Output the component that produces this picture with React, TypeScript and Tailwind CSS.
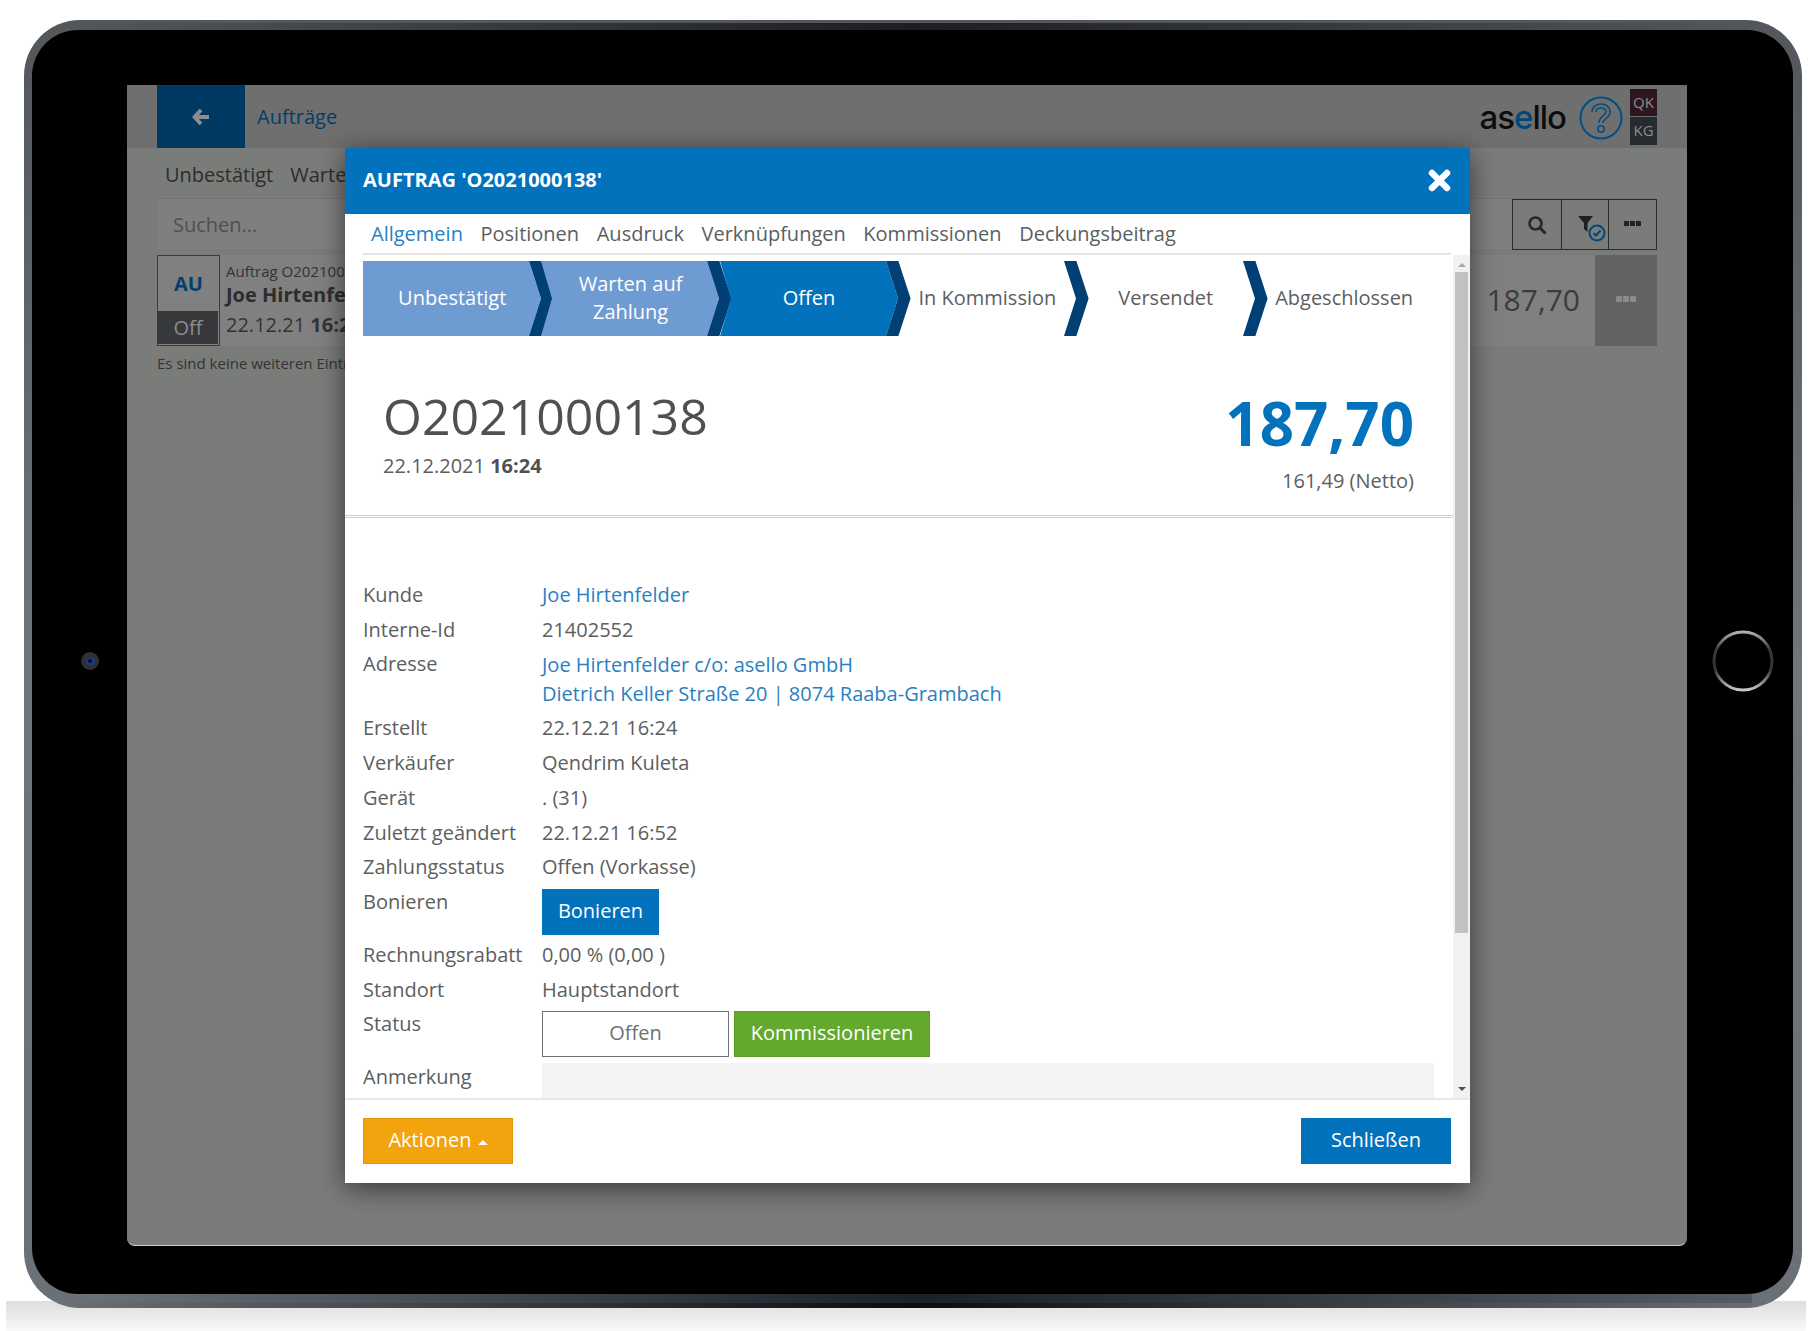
const OS = "font-['Open_Sans',sans-serif]";

const steps = [
  { t: <>Unbestätigt</>, fill: '#6f9bd3', text: 'text-white', first: true },
  { t: <>Warten auf<br />Zahlung</>, fill: '#6f9bd3', text: 'text-white' },
  { t: <>Offen</>, fill: '#0272bd', text: 'text-white' },
  { t: <>In Kommission</>, fill: 'none', text: 'text-[#5c5e60]' },
  { t: <>Versendet</>, fill: 'none', text: 'text-[#5c5e60]' },
  { t: <>Abgeschlossen</>, fill: 'none', text: 'text-[#5c5e60]', last: true },
];

function Step({ s }: { s: (typeof steps)[number] }) {
  return (
    <div className="relative flex h-[75px] w-[178.4px] shrink-0 items-center justify-center pb-[1px]">
      <svg className="absolute left-0 top-0 overflow-visible" width="192" height="75" viewBox="0 0 192 75">
        {s.fill !== 'none' && (
          <polygon
            fill={s.fill}
            points={s.first ? '0,0 166,0 178,37.5 166,75 0,75' : '0,0 166,0 178,37.5 166,75 0,75 11,37.5'}
          />
        )}
        {!s.last && <polygon fill="#004075" points="166,0 178.4,0 190.6,37.5 178.4,75 166,75 178,37.5" />}
      </svg>
      <span className={`relative w-[180px] text-center leading-[28px] ${s.text}`}>{s.t}</span>
    </div>
  );
}

function Row({ label, children }: { label: string; children: React.ReactNode }) {
  return (
    <div className="flex items-start">
      <div className="w-[179px] shrink-0 leading-[34.7px] text-[#5c5e60]">{label}</div>
      <div className="leading-[34.7px] text-[#5c5e60]">{children}</div>
    </div>
  );
}

const LINK = 'text-[#2a7fc0]';

export default function App() {
  return (
    <div className={`relative h-[1331px] w-[1815px] overflow-hidden bg-white ${OS} text-[20px]`}>
      {/* ground shadow */}
      <div className="absolute bottom-0 left-[6px] h-[30px] w-[1800px] bg-gradient-to-b from-[#dedede] to-[#f8f8f8]" />
      <div className="relative ml-[24px] mt-[20px] h-[1288px] w-[1778px] rounded-[56px] bg-gradient-to-b from-[#53575b] via-[#6f757a] to-[#6a7076] pb-[14px] pl-[8px] pr-[9px] pt-[10px]">
        {/* dark inner lines on the top and bottom bezel */}
        <div className="absolute left-[40px] right-[40px] top-[3px] h-[7px] bg-gradient-to-r from-transparent via-[#1c1e20] to-transparent" />
        <div className="absolute bottom-[5px] left-[60px] right-[50px] h-[9px] bg-gradient-to-r from-[#6a7278] via-[#19212a] to-[#565c63]" />
        <div className="absolute bottom-0 left-[30px] right-[30px] h-[5px] bg-gradient-to-r from-transparent via-[#0c0c0c] to-transparent" />
        <div className="relative h-full w-full rounded-[46px] bg-black pb-[48px] pl-[95px] pr-[106px] pt-[55px]">
          {/* camera */}
          <div className="absolute left-[49px] top-[622px] flex h-[18px] w-[18px] items-center justify-center rounded-full bg-[#303030] blur-[0.5px]">
            <div className="flex h-[9px] w-[9px] items-center justify-center rounded-full bg-[#1c3a7c]">
              <div className="h-[4px] w-[4px] rounded-full bg-[#0a1228]" />
            </div>
          </div>
          {/* home button */}
          <svg className="absolute left-[1680px] top-[600px]" width="62" height="62" viewBox="0 0 62 62">
            <defs>
              <linearGradient id="ring" x1="0" y1="0" x2="0" y2="1">
                <stop offset="0" stopColor="#b0b0b0" />
                <stop offset="0.3" stopColor="#3a3a3a" />
                <stop offset="0.65" stopColor="#333333" />
                <stop offset="1" stopColor="#c8c8c8" />
              </linearGradient>
            </defs>
            <circle cx="31" cy="31" r="29" fill="none" stroke="url(#ring)" strokeWidth="3" />
          </svg>

          {/* screen */}
          <div className="relative h-[1161px] w-[1560px] rounded-b-[8px] border-b border-b-[#cfcfcf] bg-[#7a7c7a]">
            <header className="flex h-[63px] items-center bg-[#6f6f6f] pl-[30px] pr-[30px]">
              <div className="flex h-full w-[88px] items-center justify-center bg-[#003a63]">
                <svg width="18" height="18" viewBox="0 0 18 18">
                  <path d="M9 2 L2.5 9 L9 16 M3 9 H17" fill="none" stroke="#8d8d8d" strokeWidth="4" strokeLinejoin="round" />
                </svg>
              </div>
              <span className="ml-[12px] text-[#003e6c]">Aufträge</span>
              <div className="ml-auto flex items-center">
                <span className="mr-[13px] mt-[3px] font-['Inter',sans-serif] text-[33px] font-medium tracking-[-1px] text-[#0d0d0d]">
                  as<span className="text-[#00487a]">e</span>llo
                </span>
                <svg width="44" height="44" viewBox="0 0 44 44" className="mr-[7px] mt-[2px]">
                  <circle cx="22" cy="22" r="20.5" fill="none" stroke="#004f85" strokeWidth="2" />
                  <path d="M15 16 C15 8 29 8 29 16 C29 21 22 21 22 27" fill="none" stroke="#004f85" strokeWidth="5.5" />
                  <path d="M15 16 C15 8 29 8 29 16 C29 21 22 21 22 27" fill="none" stroke="#6f6f6f" strokeWidth="2.5" />
                  <circle cx="22" cy="33" r="3.2" fill="none" stroke="#004f85" strokeWidth="1.6" />
                </svg>
                <div className="flex flex-col gap-px text-center text-[15px] leading-[27px] text-[#8c8c8c]">
                  <div className="h-[27px] w-[27px] bg-[#2f1520]">QK</div>
                  <div className="h-[28px] w-[27px] bg-[#262b2f]">KG</div>
                </div>
              </div>
            </header>
            <div className="px-[30px]">
              <div className="flex h-[51px] items-center gap-[17px] border-b border-[#727472] pl-[8px] pt-[3px] text-[#2c2c2c]">
                <span>Unbestätigt</span>
                <span>Warten auf Zahlung</span>
              </div>
              <div className="flex h-[50px] items-stretch justify-between bg-[#7f7f7f]">
                <span className="pl-[16px] pt-[1px] leading-[50px] text-[#505050]">Suchen...</span>
                <div className="flex h-[51px] border border-[#2b2b2b] bg-[#7a7c7a]">
                  <div className="flex w-[49px] items-center justify-center border-r border-[#2b2b2b]">
                    <svg width="20" height="20" viewBox="0 0 20 20">
                      <circle cx="8.5" cy="8.5" r="6" fill="none" stroke="#272727" strokeWidth="2.6" />
                      <path d="M13 13 L18.5 18.5" stroke="#272727" strokeWidth="3" />
                    </svg>
                  </div>
                  <div className="flex w-[47px] items-center justify-center border-r border-[#2b2b2b]">
                    <svg width="30" height="28" viewBox="0 0 30 28" className="ml-[14px] mt-[8px]">
                      <path d="M1 1 H16 L10.5 8 V17 L7 14 V8 Z" fill="#1f1f1f" />
                      <circle cx="20" cy="18" r="7.5" fill="none" stroke="#00487a" strokeWidth="2" />
                      <path d="M16.5 18 L19 20.5 L23.5 15.5" fill="none" stroke="#00487a" strokeWidth="2.2" />
                    </svg>
                  </div>
                  <div className="flex w-[47px] items-center justify-center">
                    <div className="mb-[2px] flex gap-px">
                      <span className="h-[5px] w-[5px] bg-[#222]" />
                      <span className="h-[5px] w-[5px] bg-[#222]" />
                      <span className="h-[5px] w-[5px] bg-[#222]" />
                    </div>
                  </div>
                </div>
              </div>
              <div className="mt-[6px] flex h-[91px] items-stretch bg-[#808080]">
                <div className="flex w-[63px] shrink-0 flex-col border border-[#3a3c3e] bg-[#808080]">
                  <div className="flex h-[55px] items-center justify-center text-[20px] font-bold text-[#00406f]">AU</div>
                  <div className="mb-[1px] mr-[1px] flex flex-1 items-center justify-center bg-[#36383b] text-[#8d8d8d]">Off</div>
                </div>
                <div className="ml-[6px] flex flex-col whitespace-nowrap pt-[4px]">
                  <div className="text-[15px] leading-[24px] text-[#333]">Auftrag O2021000138</div>
                  <div className="text-[20px] font-bold leading-[24px] text-[#2d2d2d]">Joe Hirtenfelder</div>
                  <div className="mt-[3px] leading-[30px] text-[#333]">
                    22.12.21 <b>16:24</b>
                  </div>
                </div>
                <div className="ml-auto flex items-center pb-[2px] pr-[15px] text-[30px] text-[#393b3d]">187,70</div>
                <div className="flex w-[62px] items-center justify-center bg-[#616263]">
                  <div className="mb-[3px] flex gap-px">
                    <span className="h-[6px] w-[6px] rounded-[1px] bg-[#8b8b8b]" />
                    <span className="h-[6px] w-[6px] rounded-[1px] bg-[#8b8b8b]" />
                    <span className="h-[6px] w-[6px] rounded-[1px] bg-[#8b8b8b]" />
                  </div>
                </div>
              </div>
              <div className="mt-[7px] text-[15px] leading-[20px] text-[#333]">Es sind keine weiteren Einträge</div>
            </div>

            {/* modal */}
            <div className="absolute left-[218px] top-[63px] flex h-[1035px] w-[1125px] flex-col bg-white shadow-[0_5px_25px_rgba(0,0,0,0.55)]">
              <div className="flex h-[66px] shrink-0 items-center justify-between bg-[#0272bd] pb-[2px] pl-[18px] pr-[19px]">
                <span className="text-[20px] font-bold text-white">AUFTRAG 'O2021000138'</span>
                <svg width="23" height="23" viewBox="0 0 23 23" className="mt-[1px]">
                  <path d="M4 4 L19 19 M19 4 L4 19" stroke="#fff" strokeWidth="6.5" strokeLinecap="round" />
                </svg>
              </div>
              <div className="ml-[18px] mr-[19px] flex h-[41px] shrink-0 items-center gap-[17.6px] border-b-2 border-[#e4e4e4] pl-[8px] text-[#5c5e60]">
                <span className={LINK}>Allgemein</span>
                <span>Positionen</span>
                <span>Ausdruck</span>
                <span>Verknüpfungen</span>
                <span>Kommissionen</span>
                <span>Deckungsbeitrag</span>
              </div>
              <div className="flex min-h-0 flex-1">
                <div className="min-w-0 flex-1 overflow-hidden">
                  <div className="ml-[18px] mt-[6px] flex">
                    {steps.map((s, i) => (
                      <Step key={i} s={s} />
                    ))}
                  </div>
                  <div className="flex h-[182px] justify-between border-b-[3px] border-double border-[#cfcfcf] pl-[38px] pr-[39px]">
                    <div className="pt-[45px]">
                      <div className="text-[50px] leading-[70px] text-[#4e5154]">O2021000138</div>
                      <div className="leading-[30px] text-[#5c5e60]">
                        22.12.2021 <b className="text-[#4e5154]">16:24</b>
                      </div>
                    </div>
                    <div className="pt-[45px] text-right">
                      <div className="text-[60px] font-bold leading-[84px] text-[#0272bd]">187,70</div>
                      <div className="pt-[1px] leading-[30px] text-[#5c5e60]">161,49 (Netto)</div>
                    </div>
                  </div>
                  <div className="ml-[18px] pt-[60px]">
                    <Row label="Kunde"><span className={LINK}>Joe Hirtenfelder</span></Row>
                    <Row label="Interne-Id">21402552</Row>
                    <Row label="Adresse">
                      <div className={`leading-[29px] ${LINK}`}>
                        <div className="pt-[3px]">Joe Hirtenfelder c/o: asello GmbH</div>
                        <div className="pb-[3px]">Dietrich Keller Straße 20 | 8074 Raaba-Grambach</div>
                      </div>
                    </Row>
                    <Row label="Erstellt">22.12.21 16:24</Row>
                    <Row label="Verkäufer">Qendrim Kuleta</Row>
                    <Row label="Gerät">. (31)</Row>
                    <Row label="Zuletzt geändert">22.12.21 16:52</Row>
                    <Row label="Zahlungsstatus">Offen (Vorkasse)</Row>
                    <Row label="Bonieren">
                      <div className="mb-[3px] mt-[4px] flex h-[46px] w-[117px] items-center justify-center bg-[#0272bd] pb-[2px] text-white">Bonieren</div>
                    </Row>
                    <Row label="Rechnungsrabatt">0,00 % (0,00 )</Row>
                    <Row label="Standort">Hauptstandort</Row>
                    <Row label="Status">
                      <div className="mb-[6px] mt-[4px] flex gap-[5px]">
                        <div className="flex h-[46px] w-[187px] items-center justify-center border border-[#6f7274] pb-[2px] text-[#6f7274]">Offen</div>
                        <div className="flex h-[46px] w-[196px] items-center justify-center border border-[#579b28] bg-[#62a92e] pb-[2px] text-white">Kommissionieren</div>
                      </div>
                    </Row>
                    <div className="flex">
                      <div className="mt-[-1px] w-[179px] shrink-0 leading-[30px] text-[#5c5e60]">Anmerkung</div>
                      <div className="h-[60px] w-[892px] bg-[#f4f4f4]" />
                    </div>
                  </div>
                </div>
                {/* scrollbar */}
                <div className="flex w-[17px] shrink-0 flex-col items-center bg-[#f1f1f1]">
                  <div className="flex h-[17px] items-center justify-center pt-[2px]">
                    <span className="h-0 w-0 border-x-[4px] border-b-[4px] border-x-transparent border-b-[#a8a8a8]" />
                  </div>
                  <div className="h-[661px] w-[13px] bg-[#c1c1c1]" />
                  <div className="mt-auto flex h-[18px] items-center justify-center">
                    <span className="h-0 w-0 border-x-[4px] border-t-[4px] border-x-transparent border-t-[#505050]" />
                  </div>
                </div>
              </div>
              <div className="flex h-[85px] shrink-0 items-start justify-between border-t-2 border-[#e8e8e8] pl-[18px] pr-[19px] pt-[18px]">
                <div className="flex h-[46px] w-[150px] items-center justify-center gap-[6px] border border-[#e0980a] bg-[#f2a30d] pb-[2px] text-white">
                  Aktionen
                  <span className="mt-[4px] h-0 w-0 border-x-[5px] border-b-[5px] border-x-transparent border-b-white" />
                </div>
                <div className="flex h-[46px] w-[150px] items-center justify-center bg-[#0272bd] pb-[2px] text-white">Schließen</div>
              </div>
            </div>
          </div>
        </div>
      </div>
    </div>
  );
}
